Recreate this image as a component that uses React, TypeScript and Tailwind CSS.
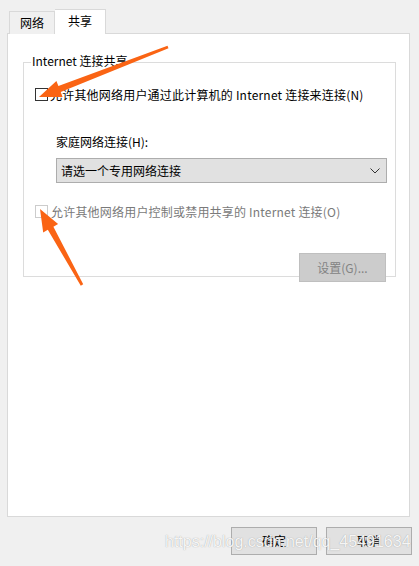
import React from 'react';

type Pt = [number, number];

// tapered arrow polygon: thin at the tail, wide head at the tip
function arrowPoints(tail: Pt, tip: Pt, w0 = 1.5, w1 = 3, headLen = 20, headHalf = 8) {
  const dx = tip[0] - tail[0];
  const dy = tip[1] - tail[1];
  const len = Math.hypot(dx, dy);
  const ux = dx / len;
  const uy = dy / len;
  const nx = -uy;
  const ny = ux;
  const bx = tip[0] - ux * headLen;
  const by = tip[1] - uy * headLen;
  const pts: Pt[] = [
    [tail[0] + nx * w0, tail[1] + ny * w0],
    [bx + nx * w1, by + ny * w1],
    [bx + nx * headHalf, by + ny * headHalf],
    tip,
    [bx - nx * headHalf, by - ny * headHalf],
    [bx - nx * w1, by - ny * w1],
    [tail[0] - nx * w0, tail[1] - ny * w0],
  ];
  return pts.map((p) => `${p[0].toFixed(1)},${p[1].toFixed(1)}`).join(' ');
}

function Checkbox({ disabled }: { disabled?: boolean }) {
  return (
    <span
      className={`inline-block w-[13px] h-[13px] shrink-0 bg-white border ${
        disabled ? 'border-[#cccccc]' : 'border-[#333333]'
      }`}
    />
  );
}

export default function App() {
  return (
    <div
      className="relative w-[419px] h-[566px] overflow-hidden bg-[#f0f0f0] text-[12px] leading-none text-black"
      style={{ fontFamily: '"Noto Sans CJK SC", "Noto Sans", sans-serif' }}
    >
      {/* tabs */}
      <div className="flex items-end h-[34px] pl-[9px] -mb-px relative z-10">
        <div className="w-[46px] h-[23px] border border-[#d9d9d9] border-b-0 bg-[#f0f0f0] flex items-center justify-center pb-px">
          网络
        </div>
        <div className="w-[51px] h-[25px] border border-[#d9d9d9] border-b-0 border-l-0 bg-white flex items-center justify-center pb-[3px]">
          共享
        </div>
      </div>

      {/* panel */}
      <div className="ml-[7px] w-[403px] h-[484px] border border-[#d9d9d9] bg-white pt-[28px] pl-[15px]">
        {/* group box */}
        <div className="relative w-[373px] h-[215px] border border-[#dcdcdc] px-[11px]">
          <span className="absolute -top-[8px] left-[7px] bg-white px-px">Internet 连接共享</span>

          <div className="flex items-center gap-[2px] mt-[25px]">
            <Checkbox />
            <span className="tracking-[0.2px]">允许其他网络用户通过此计算机的 Internet 连接来连接(N)</span>
          </div>

          <div className="ml-[21px] mt-[35px]">家庭网络连接(H):</div>
          <div className="ml-[21px] mt-[10px] w-[331px] h-[25px] bg-[#e1e1e1] border border-[#adadad] flex items-center justify-between pl-[4px] pr-[6px]">
            <span>请选一个专用网络连接</span>
            <svg width="10" height="6" viewBox="0 0 10 6" fill="none">
              <path d="M0.5 0.5 L5 5 L9.5 0.5" stroke="#333" strokeWidth="1" />
            </svg>
          </div>

          <div className="flex items-center gap-[3px] mt-[22px] text-[#7a7a7a]">
            <Checkbox disabled />
            <span className="tracking-[0.2px]">允许其他网络用户控制或禁用共享的 Internet 连接(O)</span>
          </div>

          <div className="flex justify-end mt-[35px] -mr-[2px]">
            <div className="w-[87px] h-[29px] bg-[#cccccc] border border-[#bfbfbf] text-[#838383] flex items-center justify-center">
              设置(G)...
            </div>
          </div>
        </div>
      </div>

      {/* dialog buttons */}
      <div className="flex justify-end gap-[9px] pr-[7px] mt-[10px]">
        <div className="w-[86px] h-[28px] bg-[#e1e1e1] border border-[#adadad] flex items-center justify-center">确定</div>
        <div className="w-[86px] h-[28px] bg-[#e1e1e1] border border-[#adadad] flex items-center justify-center">取消</div>
      </div>

      {/* annotation arrows */}
      <svg className="absolute inset-0 pointer-events-none" width="419" height="566">
        <polygon points={arrowPoints([168, 47], [39, 97], 1.4, 3.2, 22, 8.5)} fill="#fa6414" />
        <polygon points={arrowPoints([82, 285], [40, 209], 1.4, 3.2, 22, 8.5)} fill="#fa6414" />
      </svg>

      {/* watermark */}
      <div
        className="absolute left-[165px] top-[534px] text-[16px] leading-none text-white/90"
        style={{ fontFamily: '"Liberation Sans", Arial, sans-serif', textShadow: '0 0 1px rgba(110,110,110,0.7)' }}
      >
        https://blog.csdn.net/qq_45491634
      </div>
    </div>
  );
}
